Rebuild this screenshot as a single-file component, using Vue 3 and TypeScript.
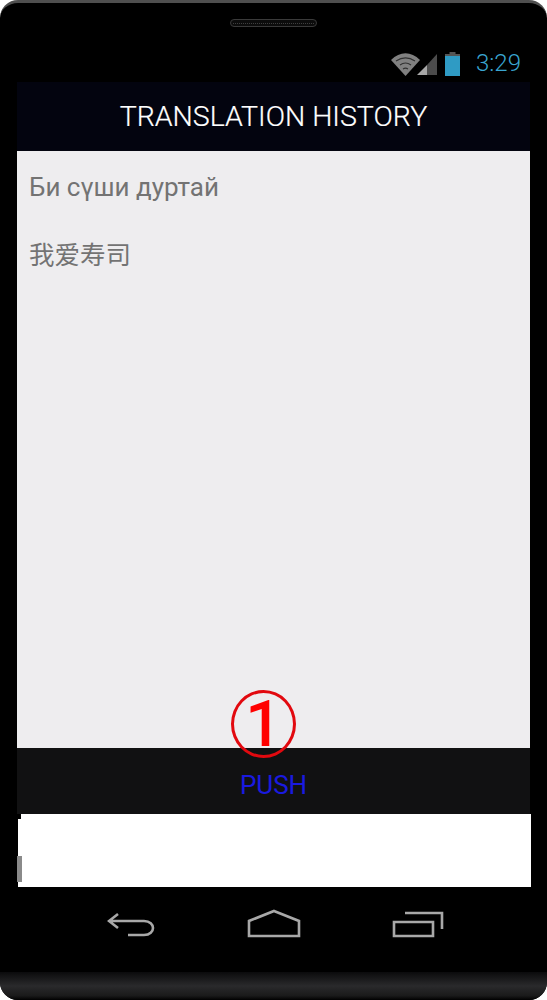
<script setup lang="ts">
const rows: string[] = ['Би сүши дуртай', '我爱寿司']
</script>

<template>
  <div class="phone">
    <div class="top">
      <div class="speaker"><span class="mesh"></span></div>
      <div class="status">
        <svg class="sig" width="48" height="23" viewBox="0 0 48 23">
          <path d="M0 7 C9 -2 20 -2 29 7 L14.5 23 Z" fill="#808080" />
          <path d="M5 8 C11 4 18 4 24 8 M9 12 C12.5 9.5 16.5 9.5 20 12 M12 16 C13.5 15 15.5 15 17 16" fill="none" stroke="#303030" stroke-width="1.1" />
          <path d="M26 22 L36 12 V22 Z" fill="#a8a8a8" />
          <path d="M36 12 L46 1 V22 H36 Z" fill="#4c4c4c" />
        </svg>
        <svg class="bat" width="15" height="24" viewBox="0 0 15 24">
          <rect x="4.5" y="0" width="6" height="3" fill="#555" />
          <rect x="0" y="2" width="15" height="22" fill="#2f9bc4" />
          <rect x="0" y="2" width="15" height="2" fill="#555" />
        </svg>
        <span class="time">3:29</span>
      </div>
    </div>
    <div class="screen">
      <header class="title">TRANSLATION HISTORY</header>
      <main class="list">
        <p v-for="r in rows" :key="r" class="row">{{ r }}</p>
      </main>
      <div class="push">
        <div class="mark"><span>1</span></div>
        PUSH
      </div>
      <div class="blank">
        <i class="notch"></i>
        <i class="thumb"></i>
      </div>
    </div>
    <nav class="nav">
      <svg width="48" height="29" viewBox="0 0 48 29" fill="none" stroke="#a8a8a8" stroke-width="2.6">
        <path d="M11 5 L2 12 L11 19 M2 12 H37 C49 12 49 26 37 26 H21" />
      </svg>
      <svg width="54" height="29" viewBox="0 0 54 29" fill="none" stroke="#a8a8a8" stroke-width="2.6">
        <path d="M27 2 L52 12 V27 H2 V12 Z" />
      </svg>
      <svg width="52" height="29" viewBox="0 0 52 29" fill="none" stroke="#a8a8a8" stroke-width="2.6">
        <path d="M2 13 H41 V27 H2 Z M13 4 H50 V20" />
      </svg>
    </nav>
    <div class="chin"></div>
  </div>
</template>

<style>
html, body { margin: 0; background: #fff; }
</style>

<style scoped>
.phone {
  width: 547px;
  height: 1000px;
  background: #000;
  border-top: 3px solid #4f4f4f;
  border-radius: 18px;
  box-sizing: border-box;
  display: flex;
  flex-direction: column;
  overflow: hidden;
  font-family: Roboto, "Noto Sans CJK SC", sans-serif;
}
.top { height: 79px; display: flex; flex-direction: column; align-items: center; }
.speaker {
  margin-top: 16px;
  width: 87px;
  height: 8px;
  box-sizing: border-box;
  border: 1px solid #3a3a3a;
  border-radius: 4px;
  background: #0c0c0c;
  display: flex;
  align-items: center;
  padding: 0 2px;
}
.mesh { flex: 1; border-top: 1px dotted #3f3f3f; }
.status {
  align-self: stretch;
  margin-top: 23px;
  padding-right: 26px;
  display: flex;
  justify-content: flex-end;
  align-items: flex-end;
}
.sig { margin-right: 6px; }
.bat { margin-right: 16px; }
.time { font-size: 24px; line-height: 26px; color: #3aa6d2; font-weight: 300; }
.screen {
  margin: 0 17px;
  display: flex;
  flex-direction: column;
  height: 805px;
}
.title {
  height: 69px;
  flex: none;
  background: #03040f;
  color: #fff;
  font-size: 28.5px;
  font-weight: 300;
  -webkit-text-stroke: 0.2px #fff;
  display: flex;
  align-items: center;
  justify-content: center;
}
.list { flex: 1; background: #eeedef; padding: 20px 12px 0; }
.row { margin: 0 0 35px; font-size: 26px; line-height: 33px; color: #737373; }
.row:last-child { font-size: 25.5px; }
.push {
  position: relative;
  height: 66px;
  flex: none;
  box-sizing: border-box;
  padding-top: 8px;
  background: #111112;
  color: #1a1ae0;
  font-size: 26px;
  display: flex;
  align-items: center;
  justify-content: center;
}
.mark {
  position: absolute;
  left: 214px;
  top: -58px;
  width: 65px;
  height: 68px;
  box-sizing: border-box;
  border: 3px solid #e2090f;
  border-radius: 50%;
  color: #f00;
  font-size: 64px;
  font-weight: 500;
  line-height: 64px;
  text-align: center;
}
.blank {
  position: relative;
  height: 73px;
  flex: none;
  margin: 0 -1px 0 1px;
  background: #fff;
}
.notch { position: absolute; left: 0; top: 0; width: 3px; height: 5px; background: #000; }
.thumb { position: absolute; left: -1px; top: 42px; width: 5px; height: 26px; background: #8a8a8a; }
.nav {
  flex: none;
  height: 85px;
  padding: 22px 103px 0 107px;
  box-sizing: border-box;
  display: flex;
  justify-content: space-between;
  align-items: flex-start;
}
.chin {
  flex: 1;
  background: linear-gradient(#0b0b0c, #2a2a2c 50%, #1a1a1a 85%, #000);
}
</style>
